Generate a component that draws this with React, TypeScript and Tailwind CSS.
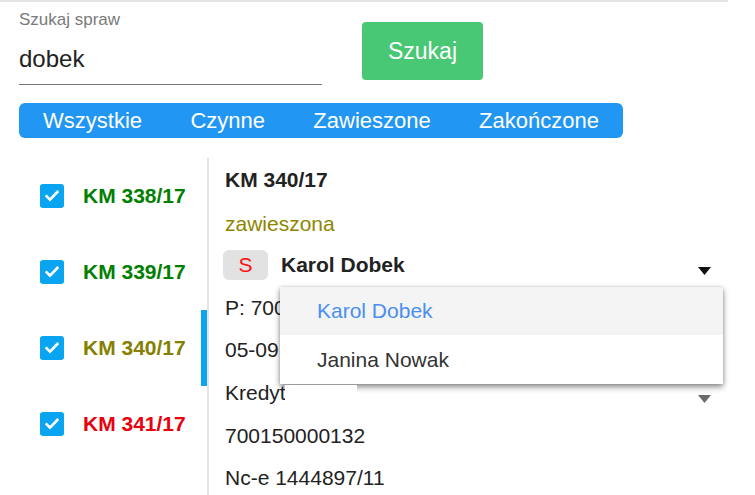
import React from "react";

type Case = { id: string; color: string; selected?: boolean };

const CASES: Case[] = [
  { id: "KM 338/17", color: "text-[#008000]" },
  { id: "KM 339/17", color: "text-[#008000]" },
  { id: "KM 340/17", color: "text-[#858000]", selected: true },
  { id: "KM 341/17", color: "text-[#e8000d]" },
];

const TABS = ["Wszystkie", "Czynne", "Zawieszone", "Zakończone"];

function CheckBox() {
  return (
    <div className="flex h-6 w-6 items-center justify-center rounded-[3px] bg-[#0aa5f0]">
      <svg width="16" height="16" viewBox="0 0 24 24" fill="none">
        <path d="M4 12.5l5 5L20 6" stroke="white" strokeWidth="4" strokeLinecap="square" />
      </svg>
    </div>
  );
}

function Caret({ className = "" }: { className?: string }) {
  return (
    <svg width="13" height="8" viewBox="0 0 13 8" className={className}>
      <path d="M0 0h13L6.5 8z" fill="currentColor" />
    </svg>
  );
}

export default function App() {
  return (
    <div className="h-[495px] w-[755px] overflow-hidden bg-white font-['Liberation_Sans',Arial,sans-serif] text-[#222]">
      <div className="w-[728px] border-t-2 border-[#e4e4e4]">
        {/* search */}
        <div className="flex pl-[19px]">
          <div className="w-[303px] border-b border-[#777] pt-[8px] pb-[10px]">
            <div className="text-[17px] leading-5 text-[#7a7a7a]">Szukaj spraw</div>
            <div className="mt-[14px] text-[24px] leading-[30px]">dobek</div>
          </div>
          <button className="ml-[40px] mt-[20px] h-[58px] w-[121px] rounded-[4px] bg-[#48c774] text-[23px] text-white">
            Szukaj
          </button>
        </div>

        {/* status tabs */}
        <div className="ml-[19px] mt-[18px] flex h-[35px] w-[604px] items-center justify-between rounded-[6px] bg-[#2196f3] px-6 text-[22px] text-white">
          {TABS.map((t) => (
            <span key={t}>{t}</span>
          ))}
        </div>

        {/* content */}
        <div className="mt-[20px] flex">
          <div className="w-[207px] shrink-0">
            {CASES.map((c) => (
              <div
                key={c.id}
                className={
                  "flex h-[76px] items-center gap-[19px] border-r-[6px] pl-10 " +
                  (c.selected ? "border-[#0aa5f0]" : "border-transparent")
                }
              >
                <CheckBox />
                <span className={"text-[21px] font-bold " + c.color}>{c.id}</span>
              </div>
            ))}
          </div>

          <div className="relative h-[340px] flex-1 border-l-2 border-[#e4e4e4] pl-4 text-[21px]">
            <div className="w-[490px]">
              <div className="flex h-[42.7px] items-center font-bold">KM 340/17</div>
              <div className="flex h-[42.7px] items-center pt-1 text-[#8f8600]">zawieszona</div>
              <div className="flex h-[42.7px] items-center">
                <span className="-ml-0.5 flex h-[30px] w-[45px] items-center justify-center rounded-md bg-[#e2e2e2] text-[#ff1010]">
                  S
                </span>
                <span className="ml-[13px] font-bold">Karol Dobek</span>
                <Caret className="ml-auto mr-1 mt-3 text-[#111]" />
              </div>
              <div className="flex h-[42.7px] items-center">P: 700</div>
              <div className="flex h-[42.7px] items-center">05-09</div>
              <div className="flex h-[42.7px] items-center">
                <span>Kredyt</span>
                <Caret className="ml-auto mr-1 mt-3 text-[#6b6b6b]" />
              </div>
              <div className="flex h-[42.7px] items-center">700150000132</div>
              <div className="flex h-[42.7px] items-center">Nc-e 1444897/11</div>
            </div>

            {/* open select menu */}
            <div className="absolute left-[71px] top-[129px] w-[443px] bg-white shadow-[0_3px_6px_rgba(0,0,0,0.45),0_0_3px_rgba(0,0,0,0.15)]">
              <div className="flex h-[48px] items-center bg-[#f4f4f4] pl-[37px] text-[#4a8ff0]">Karol Dobek</div>
              <div className="flex h-[49px] items-center pl-[37px] text-[#333]">Janina Nowak</div>
            </div>
            <div className="absolute left-[76px] top-[227px] h-[16px] w-[72px] bg-white" />
          </div>
        </div>
      </div>
    </div>
  );
}
